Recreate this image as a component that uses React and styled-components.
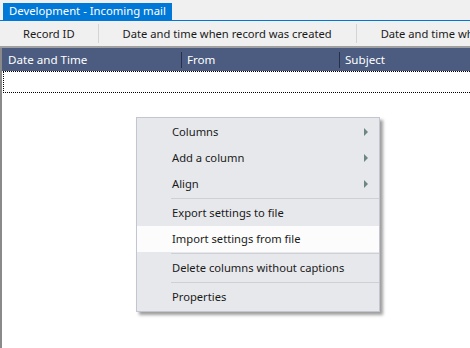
import styled, { createGlobalStyle } from "styled-components";

const Global = createGlobalStyle`
  html, body { margin: 0; padding: 0; background: #ffffff; }
  body { font-family: "Noto Sans", "DejaVu Sans", sans-serif; font-size: 11.2px; }
  * { box-sizing: border-box; }
`;

//Styled components
const Page = styled.div`
  width: 470px;
  height: 348px;
  display: flex;
  flex-direction: column;
  overflow: hidden;
  position: relative;
  background: #ffffff;
`;

const TabStrip = styled.div`
  height: 21px;
  padding: 3px 0 0 3px;
  background: #f0f0f0;
  border-bottom: 1px solid #0078d7;
  display: flex;
`;

const Tab = styled.div`
  background: #0078d7;
  color: #ffffff;
  padding: 0 6px;
  height: 17px;
  line-height: 16px;
  font-size: 11.3px;
  white-space: nowrap;
`;

const Toolbar = styled.div`
  height: 27px;
  background: #f0f0f0;
  border-bottom: 2px solid #a0a0a0;
  display: flex;
  align-items: center;
  white-space: nowrap;
`;

const ToolButton = styled.div`
  padding: 0 ${(p) => p.$pad || 23}px;
  color: #1a1a1a;
  flex-shrink: 0;
`;

const ToolSep = styled.div`
  width: 1px;
  height: 19px;
  background: #d4d4d4;
  flex-shrink: 0;
`;

const Grid = styled.div`
  flex: 1;
  border-left: 2px solid #8a8a8a;
  display: flex;
  flex-direction: column;
`;

const HeaderRow = styled.div`
  height: 23px;
  background: #4b5c80;
  display: flex;
  align-items: center;
  color: #ffffff;
  white-space: nowrap;
`;

const HeaderCell = styled.div`
  width: ${(p) => p.$w}px;
  flex-shrink: 0;
  padding-left: ${(p) => p.$pl || 5}px;
  height: 16px;
  line-height: 15px;
  font-size: 11.6px;
  border-right: ${(p) => (p.$last ? "none" : "1px solid #26304a")};
`;

const EmptyRow = styled.div`
  height: 22px;
  margin-left: 1px;
  border-top: 1px dotted #000000;
  border-bottom: 1px dotted #000000;
  border-left: 1px dotted #000000;
`;

const Menu = styled.div`
  position: absolute;
  left: 136px;
  top: 117px;
  width: 244px;
  padding: 1px 0;
  background: #e7e8ec;
  border: 1px solid #c3c6d0;
  box-shadow: 3px 3px 3px rgba(0, 0, 0, 0.38);
  display: flex;
  flex-direction: column;
`;

const MenuItem = styled.div`
  height: 26px;
  display: flex;
  align-items: center;
  padding-left: 35px;
  padding-right: 11px;
  padding-bottom: 2px;
  color: #1a1a1a;
  background: ${(p) => (p.$active ? "#fcfcfc" : "transparent")};
`;

const Label = styled.span`
  flex: 1;
`;

const Arrow = styled.span`
  width: 0;
  height: 0;
  margin-top: 1px;
  border-top: 4px solid transparent;
  border-bottom: 4px solid transparent;
  border-left: 4px solid #6d8683;
`;

const MenuSep = styled.div`
  height: 3px;
  margin-left: 34px;
  background: linear-gradient(#cfd0d6, #cfd0d6) 0 1px / 100% 1px no-repeat;
`;
//End Styled components

const menu = [
  { label: "Columns", sub: true },
  { label: "Add a column", sub: true },
  { label: "Align", sub: true },
  { sep: true },
  { label: "Export settings to file" },
  { label: "Import settings from file", active: true },
  { sep: true },
  { label: "Delete columns without captions" },
  { sep: true },
  { label: "Properties" },
];

const App = () => {
  return (
    <Page>
      <Global />
      <TabStrip>
        <Tab>Development - Incoming mail</Tab>
      </TabStrip>
      <Toolbar>
        <ToolButton $pad={23}>Record ID</ToolButton>
        <ToolSep />
        <ToolButton $pad={24}>Date and time when record was created</ToolButton>
        <ToolSep />
        <ToolButton $pad={24}>Date and time when record was modified</ToolButton>
      </Toolbar>
      <Grid>
        <HeaderRow>
          <HeaderCell $w={180} $pl={6}>Date and Time</HeaderCell>
          <HeaderCell $w={158}>From</HeaderCell>
          <HeaderCell $w={140} $last>Subject</HeaderCell>
        </HeaderRow>
        <EmptyRow />
      </Grid>
      <Menu>
        {menu.map((m, i) =>
          m.sep ? (
            <MenuSep key={i} />
          ) : (
            <MenuItem key={i} $active={m.active}>
              <Label>{m.label}</Label>
              {m.sub && <Arrow />}
            </MenuItem>
          )
        )}
      </Menu>
    </Page>
  );
};

export default App;
